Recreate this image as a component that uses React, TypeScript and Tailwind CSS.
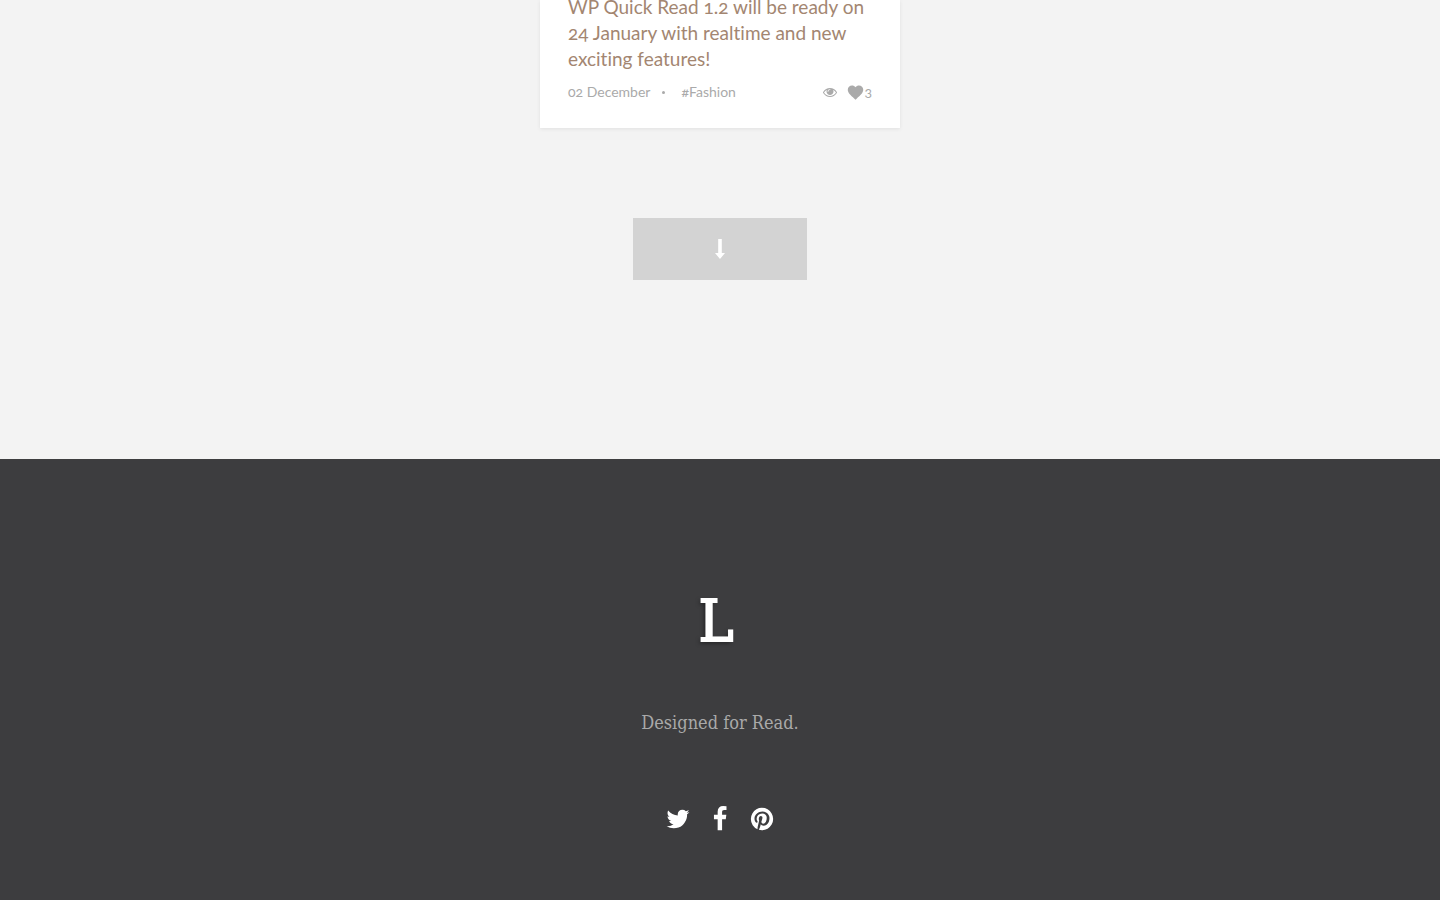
import React from 'react';

type IconProps = { className: string; viewBox?: string; d: string };

function Icon({ className, viewBox = '0 0 1792 1792', d }: IconProps) {
  return (
    <svg aria-hidden="true" viewBox={viewBox} className={className} fill="currentColor">
      <path d={d} />
    </svg>
  );
}

const EYE =
  'M1664 960q-152-236-381-353 61 104 61 225 0 185-131.5 316.5t-316.5 131.5-316.5-131.5-131.5-316.5q0-121 61-225-229 117-381 353 133 205 333.5 326.5t434.5 121.5 434.5-121.5 333.5-326.5zm-720-384q0-20-14-34t-34-14q-125 0-214.5 89.5t-89.5 214.5q0 20 14 34t34 14 34-14 14-34q0-86 61-147t147-61q20 0 34-14t14-34zm848 384q0 34-20 69-140 230-376.5 368.5t-499.5 138.5-499.5-139-376.5-368q-20-35-20-69t20-69q140-229 376.5-368t499.5-139 499.5 139 376.5 368q20 35 20 69z';
const HEART =
  'M12 21.35l-1.45-1.32C5.4 15.36 2 12.28 2 8.5 2 5.42 4.42 3 7.5 3c1.74 0 3.41.81 4.5 2.09C13.09 3.81 14.76 3 16.5 3 19.58 3 22 5.42 22 8.5c0 3.78-3.4 6.86-8.55 11.54L12 21.35z';
const TWITTER =
  'M1684 408q-67 98-162 167 1 14 1 42 0 130-38 259.5t-115.5 248.5-184.5 210.5-258 146-323 54.5q-271 0-496-145 35 4 78 4 225 0 401-138-105-2-188-64.5t-114-159.5q33 5 61 5 43 0 85-11-112-23-185.5-111.5t-73.5-205.5v-4q68 38 146 41-66-44-105-115t-39-154q0-88 44-163 121 149 294.5 238.5t371.5 99.5q-8-38-8-74 0-134 94.5-228.5t228.5-94.5q140 0 236 102 109-21 205-78-37 115-142 178 93-10 186-50z';
const FACEBOOK =
  'M1343 12v264h-157q-86 0-116 36t-30 108v189h293l-39 296h-254v759h-306v-759h-255v-296h255v-218q0-186 104-288.5t277-102.5q147 0 228 12z';
const PINTEREST =
  'M1664 896q0 209-103 385.5t-279.5 279.5-385.5 103q-111 0-218-32 59-93 78-164 9-34 54-211 20 39 73 67.5t114 28.5q121 0 216-68.5t147-188.5 52-270q0-114-59.5-214t-172.5-163-255-63q-105 0-196 29t-154.5 77-109 110.5-67 129.5-21.5 134q0 104 40 183t117 111q30 12 38-20 2-7 8-31t8-30q6-23-11-43-51-61-51-151 0-151 104.5-259.5t273.5-108.5q151 0 235.5 82t84.5 213q0 170-68.5 289t-175.5 119q-61 0-98-43.5t-23-104.5q8-35 26.5-93.5t30-103 11.5-75.5q0-50-27-83t-77-33q-62 0-105 57t-43 142q0 73 25 122l-99 418q-17 70-13 177-206-91-333-281t-127-423q0-209 103-385.5t279.5-279.5 385.5-103 385.5 103 279.5 279.5 103 385.5z';

function PostCard() {
  return (
    <article className="w-[360px] max-w-full bg-white px-7 pb-6 shadow-[0_1px_4px_rgba(0,0,0,0.08)]">
      <h2 className="-mt-1.5 text-[19px] leading-[26px] text-[#a38671]">
        <a href="#post">WP Quick Read 1.2 will be ready on 24 January with realtime and new exciting features!</a>
      </h2>
      <div className="mt-2 flex h-6 items-center text-sm text-[#aaaaaa]">
        <time>02 December</time>
        <span className="ml-3 size-[3px] rounded-full bg-[#aaaaaa]" />
        <a href="#fashion" className="ml-4">
          #Fashion
        </a>
        <span className="ml-auto">
          <Icon className="size-[14px]" d={EYE} />
        </span>
        <button type="button" aria-label="Like" className="ml-2.5 flex items-center">
          <Icon className="h-[17px] w-[17px]" viewBox="1 1 22 22" d={HEART} />
          <span>3</span>
        </button>
      </div>
    </article>
  );
}

export default function App() {
  return (
    <div className="flex min-h-screen flex-col bg-[#f3f3f3] font-['Lato','Open_Sans',sans-serif] oldstyle-nums [font-feature-settings:'liga'_0,'onum'_1]">
      <main className="flex flex-col items-center pb-[179px]">
        <PostCard />
        <button
          type="button"
          aria-label="Load more"
          className="mt-[90px] flex h-[62px] w-[174px] items-center justify-center bg-[#d3d3d3] text-white"
        >
          <Icon className="h-5 w-[10px]" viewBox="0 0 10 20" d="M3.2 0h3.6v14H10L5 20 0 14h3.2z" />
        </button>
      </main>
      <footer className="flex grow flex-col items-center bg-[#3d3d3f] pt-[120px] pb-[65px] font-['DejaVu_Serif_Condensed','DejaVu_Serif',serif]">
        <div className="pr-2 text-[58px] leading-[84px] text-white [-webkit-text-stroke:2px_white] [text-shadow:-2px_2px_4px_rgba(0,0,0,0.5)]">
          L
        </div>
        <p className="mt-12 text-lg leading-6 text-[#a9a9a9]">Designed for Read.</p>
        <nav aria-label="Social" className="mt-[71px] flex items-center gap-4 text-white">
          <a href="#twitter" aria-label="Twitter">
            <Icon className="size-[26px]" d={TWITTER} />
          </a>
          <a href="#facebook" aria-label="Facebook">
            <Icon className="size-[26px]" d={FACEBOOK} />
          </a>
          <a href="#pinterest" aria-label="Pinterest">
            <Icon className="size-[26px]" d={PINTEREST} />
          </a>
        </nav>
      </footer>
    </div>
  );
}
